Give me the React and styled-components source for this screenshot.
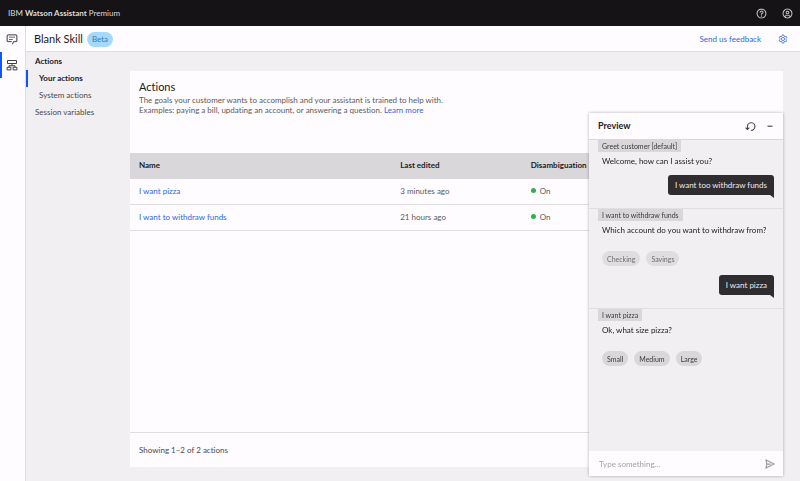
import React from 'react';
import styled, { createGlobalStyle } from 'styled-components';

const GlobalStyle = createGlobalStyle`
    *, *::before, *::after { box-sizing: border-box; }
    body {
        margin: 0;
        background: #f1eff2;
        color: #1c1a1d;
        font: 8px/10px Lato, "Noto Sans", sans-serif;
        font-variant-ligatures: none;
    }
    p { margin: 0; }
    button, input { font: inherit; color: inherit; }
`;

const ChatIcon = () => (
    <Icon $size={12} viewBox="0 0 32 32">
        <path d="M17.740 30 16 29l4-7h6a2 2 0 0 0 2-2V8a2 2 0 0 0-2-2H6a2 2 0 0 0-2 2v12a2 2 0 0 0 2 2h9v2H6a4 4 0 0 1-4-4V8a4 4 0 0 1 4-4h20a4 4 0 0 1 4 4v12a4 4 0 0 1-4 4h-4.840Z" stroke="currentColor" strokeWidth="0.6" />
        <path d="M8 10h16v2H8zM8 16h10v2H8z" />
    </Icon>
);

const FlowIcon = () => (
    <Icon $size={12} viewBox="0 0 32 32" fill="none" stroke="currentColor" strokeWidth="2.6">
        <path d="M4 4h24v8H4zM16 12v6M8 22v-4h16v4M3 22h10v7H3zM19 22h10v7H19z" />
    </Icon>
);

const HelpIcon = () => (
    <Icon $size={11} viewBox="0 0 32 32" stroke="currentColor" strokeWidth="0.6">
        <path d="M16 2a14 14 0 1 0 14 14A14 14 0 0 0 16 2Zm0 26a12 12 0 1 1 12-12 12 12 0 0 1-12 12Z" />
        <circle cx="16" cy="23.5" r="1.5" />
        <path d="M17 8h-1.500A4.490 4.490 0 0 0 11 12.500V13h2v-.5A2.500 2.500 0 0 1 15.500 10H17a2.500 2.500 0 0 1 0 5h-2v4.500h2V17a4.500 4.500 0 0 0 0-9Z" />
    </Icon>
);

const UserIcon = () => (
    <Icon $size={11} viewBox="0 0 32 32" stroke="currentColor" strokeWidth="0.6">
        <path d="M16 8a5 5 0 1 0 5 5 5 5 0 0 0-5-5Zm0 8a3 3 0 1 1 3-3 3 3 0 0 1-3 3Z" />
        <path d="M16 2a14 14 0 1 0 14 14A14 14 0 0 0 16 2Zm-6 24.380V25a3 3 0 0 1 3-3h6a3 3 0 0 1 3 3v1.380a11.900 11.900 0 0 1-12 0Zm13.990-1.450A5 5 0 0 0 19 20h-6a5 5 0 0 0-4.990 4.930 12 12 0 1 1 15.980 0Z" />
    </Icon>
);

const GearIcon = () => (
    <Icon $size={10} viewBox="0 0 32 32" fill="none" stroke="currentColor" strokeWidth="2.6">
        <path d="M13.500 3h5l.8 4L22 8.500l3.800-1.300 2.500 4.300-3 2.700v3.600l3 2.700-2.500 4.300-3.800-1.300-2.700 1.500-.8 4h-5l-.8-4L10 23.500l-3.800 1.300-2.500-4.300 3-2.700v-3.600l-3-2.700 2.500-4.300L10 8.500 12.700 7Z" />
        <circle cx="16" cy="16" r="5" />
    </Icon>
);

const ResetIcon = () => (
    <Icon $size={11} viewBox="0 0 32 32" stroke="currentColor" strokeWidth="0.6">
        <path d="M18 28a12 12 0 1 0-12-12v6.200l-3.600-3.600L1 20l6 6 6-6-1.400-1.400L8 22.200V16a10 10 0 1 1 10 10Z" />
    </Icon>
);

const MinimizeIcon = () => (
    <Icon $size={10} viewBox="0 0 32 32">
        <path d="M8 15h16v3H8z" />
    </Icon>
);

const SendIcon = () => (
    <Icon $size={12} viewBox="0 0 32 32" stroke="currentColor" strokeWidth="0.6">
        <path d="m27.450 15.110-22-11a1 1 0 0 0-1.080.12 1 1 0 0 0-.33 1L7 16 4 26.740A1 1 0 0 0 5 28a1 1 0 0 0 .45-.11l22-11a1 1 0 0 0 0-1.780Zm-20.900 10L8.760 17H18v-2H8.760L6.550 6.890 24.760 16Z" />
    </Icon>
);

const actions = [
    { name: 'I want pizza', edited: '3 minutes ago' },
    { name: 'I want to withdraw funds', edited: '21 hours ago' },
];

const turns = [
    { topic: 'Greet customer [default]', text: 'Welcome, how can I assist you?', reply: 'I want too withdraw funds' },
    { topic: 'I want to withdraw funds', text: 'Which account do you want to withdraw from?', options: ['Checking', 'Savings'], used: true, reply: 'I want pizza' },
    { topic: 'I want pizza', text: 'Ok, what size pizza?', options: ['Small', 'Medium', 'Large'] },
];

function PreviewPanel() {
    return (
        <Panel aria-label="Preview">
            <PanelHeader>
                <PanelTitle>Preview</PanelTitle>
                <IconButton aria-label="Restart conversation"><ResetIcon /></IconButton>
                <IconButton aria-label="Minimize"><MinimizeIcon /></IconButton>
            </PanelHeader>
            <Conversation>
                {turns.map((turn) => (
                    <Turn key={turn.topic}>
                        <Topic>{turn.topic}</Topic>
                        <Message>{turn.text}</Message>
                        {turn.options && (
                            <Options>
                                {turn.options.map((option) => (
                                    <Chip key={option} $used={turn.used}>{option}</Chip>
                                ))}
                            </Options>
                        )}
                        {turn.reply && <Reply>{turn.reply}</Reply>}
                    </Turn>
                ))}
            </Conversation>
            <Composer>
                <ComposerInput aria-label="Message" placeholder="Type something..." />
                <IconButton $muted aria-label="Send"><SendIcon /></IconButton>
            </Composer>
        </Panel>
    );
}

export default function App() {
    return (
        <Page>
            <GlobalStyle />
            <TopBar>
                <Brand>IBM <strong>Watson Assistant</strong> Premium</Brand>
                <IconButton aria-label="Help"><HelpIcon /></IconButton>
                <IconButton aria-label="Account"><UserIcon /></IconButton>
            </TopBar>
            <Body>
                <Rail aria-label="Skills">
                    <RailButton aria-label="Dialog"><ChatIcon /></RailButton>
                    <RailButton $active aria-label="Actions"><FlowIcon /></RailButton>
                </Rail>
                <Main>
                    <SkillBar>
                        <SkillName>Blank Skill</SkillName>
                        <Beta>Beta</Beta>
                        <Feedback href="#feedback">Send us feedback</Feedback>
                        <IconButton $blue aria-label="Settings"><GearIcon /></IconButton>
                    </SkillBar>
                    <Workspace>
                        <SideNav aria-label="Skill sections">
                            <NavLink href="#actions" $bold>Actions</NavLink>
                            <NavLink href="#your-actions" $bold $nested $active>Your actions</NavLink>
                            <NavLink href="#system-actions" $nested>System actions</NavLink>
                            <NavLink href="#session-variables">Session variables</NavLink>
                        </SideNav>
                        <Card>
                            <Intro>
                                <Heading>Actions</Heading>
                                <p>The goals your customer wants to accomplish and your assistant is trained to help with.</p>
                                <p>Examples: paying a bill, updating an account, or answering a question. <Link href="#learn">Learn more</Link></p>
                            </Intro>
                            <Table>
                                <thead>
                                    <tr>
                                        <HeadCell $width="40%">Name</HeadCell>
                                        <HeadCell $width="20%">Last edited</HeadCell>
                                        <HeadCell $width="40%">Disambiguation</HeadCell>
                                    </tr>
                                </thead>
                                <tbody>
                                    {actions.map((action) => (
                                        <tr key={action.name}>
                                            <Cell><Link href="#edit">{action.name}</Link></Cell>
                                            <Cell>{action.edited}</Cell>
                                            <Cell><Status>On</Status></Cell>
                                        </tr>
                                    ))}
                                </tbody>
                            </Table>
                            <CardFooter>Showing 1–2 of 2 actions</CardFooter>
                        </Card>
                    </Workspace>
                </Main>
            </Body>
            <PreviewPanel />
        </Page>
    );
}

const Page = styled.div`
    display: flex;
    flex-direction: column;
    min-height: 100vh;
`;

const Icon = styled.svg`
    display: block;
    width: ${(p) => p.$size}px;
    height: ${(p) => p.$size}px;
    fill: ${(p) => p.fill || 'currentColor'};
`;

const IconButton = styled.button`
    display: flex;
    padding: 0;
    border: 0;
    background: none;
    color: ${(p) => (p.$blue ? '#3b6fe0' : p.$muted ? '#8a878b' : 'inherit')};
`;

const TopBar = styled.header`
    display: flex;
    align-items: center;
    gap: 15px;
    height: 26px;
    padding: 0 7px 0 8px;
    background: #151316;
    color: #dddbde;
`;

const Brand = styled.div`
    flex: 1;
`;

const Body = styled.div`
    display: flex;
    flex: 1;
`;

const Rail = styled.nav`
    display: flex;
    flex-direction: column;
    width: 26px;
    background: #fefcff;
    border-right: 1px solid #e0dee1;
`;

const RailButton = styled.button`
    display: flex;
    align-items: center;
    justify-content: center;
    height: 26px;
    padding: 0 3px 0 0;
    border: 0;
    border-left: 2px solid ${(p) => (p.$active ? '#0f55fa' : 'transparent')};
    background: none;
    color: #3c3a3d;
`;

const Main = styled.main`
    display: flex;
    flex: 1;
    flex-direction: column;
    min-width: 0;
`;

const SkillBar = styled.div`
    display: flex;
    align-items: center;
    height: 26px;
    padding: 1px 12px 0 8px;
    background: #fefcff;
    border-bottom: 1px solid #e0dee1;
`;

const SkillName = styled.h1`
    margin: 0;
    font-size: 11px;
    line-height: 16px;
    font-weight: 400;
`;

const Beta = styled.span`
    margin: 0 auto 0 4px;
    padding: 2px 5px 3px;
    border-radius: 8px;
    background: #a3dafb;
    color: #3f78b5;
`;

const Link = styled.a`
    color: #2f66e0;
    text-decoration: none;
`;

const Feedback = styled(Link)`
    margin-right: 17px;
`;

const Workspace = styled.div`
    display: flex;
    flex: 1;
`;

const SideNav = styled.nav`
    display: flex;
    flex-direction: column;
    flex-shrink: 0;
    width: 104px;
    padding-top: 1px;
`;

const NavLink = styled.a`
    height: 17px;
    padding-left: ${(p) => (p.$nested ? 11 : 7)}px;
    border-left: 2px solid ${(p) => (p.$active ? '#0f55fa' : 'transparent')};
    color: ${(p) => (p.$bold ? '#1c1a1d' : '#4b494c')};
    font-weight: ${(p) => (p.$bold ? 700 : 400)};
    line-height: 17px;
    text-decoration: none;
`;

const Card = styled.section`
    display: flex;
    flex: 1;
    flex-direction: column;
    margin: 19px 17px 14px 0;
    background: #fefcff;
`;

const Intro = styled.div`
    height: 82px;
    padding: 8px 9px 0;
    color: #5c5a5d;
`;

const Heading = styled.h2`
    margin: 0;
    color: #1c1a1d;
    font-size: 11px;
    line-height: 16px;
    font-weight: 400;
`;

const Table = styled.table`
    width: 100%;
    table-layout: fixed;
    border-spacing: 0;
    text-align: left;
`;

const HeadCell = styled.th`
    width: ${(p) => p.$width};
    height: 26px;
    padding: 0 9px 2px;
    background: #d9d7da;
    font-weight: 700;
`;

const Cell = styled.td`
    height: 26px;
    padding: 0 9px 2px;
    border-bottom: 1px solid #e0dee1;
    color: #5c5a5d;
`;

const Status = styled.span`
    display: flex;
    align-items: center;
    gap: 4px;

    &::before {
        width: 5px;
        height: 5px;
        border-radius: 50%;
        background: #2fb050;
        content: '';
    }
`;

const CardFooter = styled.div`
    display: flex;
    align-items: center;
    height: 35px;
    margin-top: auto;
    padding: 0 9px;
    border-top: 1px solid #e0dee1;
    color: #4b494c;
`;

const Panel = styled.aside`
    position: fixed;
    top: 113px;
    right: 17px;
    bottom: 5px;
    display: flex;
    flex-direction: column;
    width: 194px;
    background: #f1eff2;
    box-shadow: 0 0 3px rgba(0, 0, 0, 0.3);
`;

const PanelHeader = styled.header`
    display: flex;
    flex-shrink: 0;
    align-items: center;
    gap: 9px;
    height: 27px;
    padding: 0 8px 0 9px;
    background: #fefcff;
    border-bottom: 1px solid #d9d7da;
`;

const PanelTitle = styled.h2`
    flex: 1;
    margin: 0;
    font-size: 9px;
    font-weight: 700;
`;

const Conversation = styled.div`
    flex: 1;
    min-height: 0;
    overflow: auto;
`;

const Turn = styled.section`
    display: flex;
    flex-direction: column;
    align-items: flex-start;
    padding: 0 9px 13px;

    & + & {
        border-top: 1px solid #e0dee1;
    }
`;

const Topic = styled.h3`
    margin: 0;
    padding: 1px 4px;
    background: #d9d7da;
    color: #3c3a3d;
    font-size: 7px;
    font-weight: 400;
`;

const Message = styled.p`
    padding: 4px;
`;

const Options = styled.div`
    display: flex;
    gap: 6px;
    padding: 12px 4px 4px;
`;

const Chip = styled.button`
    height: 15px;
    padding: 0 5px;
    border: 0;
    border-radius: 8px;
    background: ${(p) => (p.$used ? '#dfdde0' : '#d9d7da')};
    color: ${(p) => (p.$used ? '#6e6c6f' : '#3c3a3d')};
    font-size: 7px;
`;

const Reply = styled.p`
    position: relative;
    align-self: flex-end;
    margin-top: 5px;
    padding: 5px 7px;
    border-radius: 3px 3px 0 3px;
    background: #2f2d30;
    color: #eceaed;

    &::after {
        position: absolute;
        top: 100%;
        right: 0;
        border-top: 3px solid #2f2d30;
        border-left: 4px solid transparent;
        content: '';
    }
`;

const Composer = styled.div`
    display: flex;
    flex-shrink: 0;
    align-items: center;
    height: 25px;
    padding: 0 7px 0 10px;
    background: #fefcff;
`;

const ComposerInput = styled.input`
    flex: 1;
    min-width: 0;
    padding: 0;
    border: 0;
    outline: 0;
    background: none;

    &::placeholder {
        color: #a3a1a4;
    }
`;
